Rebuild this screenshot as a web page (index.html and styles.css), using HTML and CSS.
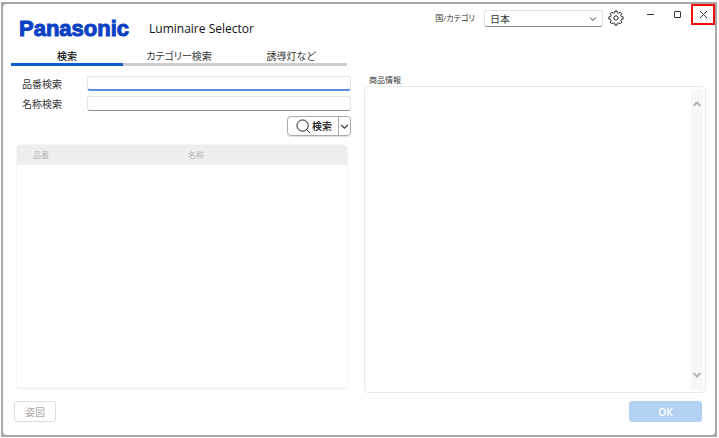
FILE: index.html
```html
<!DOCTYPE html>
<html lang="ja">
<head>
<meta charset="utf-8">
<meta name="viewport" content="width=device-width, initial-scale=1">
<title>Luminaire Selector</title>
<link rel="stylesheet" href="styles.css">
</head>
<body>
<div class="frame">
<div class="window">
  <header class="header">
    <div class="brand">
      <span class="logo">Panasonic</span>
      <h1 class="title">Luminaire Selector</h1>
    </div>
    <div class="toolbar">
      <label class="toolbar-label" for="country">国/カテゴリ</label>
      <div class="select-wrap">
        <select id="country" class="select"><option>日本</option></select>
        <svg class="select-arrow" viewBox="0 0 8 6"><path d="M1 1.500 4 4.500 7 1.500"/></svg>
      </div>
      <button class="icon-button" type="button" aria-label="設定">
        <svg class="gear" viewBox="-8 -8 16 16"><path d="M5.300 1.400 4.800 2.700 5.800 4.200 4.200 5.800 2.700 4.800 1.400 5.300 1.100 7.100H-1.100L-1.400 5.300-2.700 4.800-4.200 5.800-5.800 4.200-4.800 2.700-5.300 1.400-7.100 1.100V-1.100L-5.300-1.400-4.800-2.700-5.800-4.200-4.200-5.800-2.700-4.800-1.400-5.300-1.100-7.100H1.100L1.400-5.300 2.700-4.800 4.200-5.800 5.800-4.200 4.800-2.700 5.300-1.400 7.100-1.100V1.100z"/><circle r="2.200"/></svg>
      </button>
      <div class="window-buttons">
        <button class="window-button" type="button" aria-label="最小化"><svg viewBox="0 0 9 9"><path d="M1 4.500h7"/></svg></button>
        <button class="window-button" type="button" aria-label="最大化"><svg viewBox="0 0 9 9"><rect x="1.500" y="1.500" width="6" height="6" rx="0.500"/></svg></button>
        <button class="window-button window-button-close" type="button" aria-label="閉じる"><svg viewBox="0 0 9 9"><path d="M1 1l7 7M8 1 1 8"/></svg></button>
      </div>
    </div>
  </header>
  <main class="content">
    <section class="search-pane">
      <nav class="tabs">
        <button class="tab tab-active" type="button">検索</button>
        <button class="tab" type="button">カテゴリー検索</button>
        <button class="tab" type="button">誘導灯など</button>
      </nav>
      <form class="search-form">
        <label for="code">品番検索</label>
        <input id="code" class="field field-focused" type="text">
        <label for="name">名称検索</label>
        <input id="name" class="field" type="text">
        <div class="split-button">
          <button class="search-button" type="button">
            <svg class="lens" viewBox="0 0 16 16"><circle cx="7" cy="7" r="6"/><path d="M11.200 11.200l4 4"/></svg>検索
          </button>
          <button class="split-arrow" type="button" aria-label="検索オプション"><svg viewBox="0 0 8 6"><path d="M1 1.500 4 4.500 7 1.500"/></svg></button>
        </div>
      </form>
      <div class="results">
        <table class="results-table">
          <thead><tr><th>品番</th><th>名称</th></tr></thead>
        </table>
      </div>
    </section>
    <section class="info-pane">
      <h2 class="info-title">商品情報</h2>
      <div class="info-box">
        <div class="scrollbar">
          <svg viewBox="0 0 10 8"><path d="M1.500 6 5 2.500 8.500 6"/></svg>
          <svg viewBox="0 0 10 8"><path d="M1.500 2 5 5.500 8.500 2"/></svg>
        </div>
      </div>
    </section>
  </main>
  <footer class="footer">
    <button class="figure-button" type="button" disabled>姿図</button>
    <button class="ok-button" type="button" disabled>OK</button>
  </footer>
</div>
</div>
</body>
</html>
```
FILE: styles.css
```css
* {
  box-sizing: border-box;
}

body {
  margin: 0;
  padding: 2px 2px 1px 1px;
  background: #fff;
  color: #333;
  font: 10px/14px "Open Sans", "Noto Sans CJK JP", sans-serif;
}

button,
input,
select {
  margin: 0;
  padding: 0;
  border: 0;
  background: none;
  color: inherit;
  font: inherit;
}

svg {
  display: block;
  fill: none;
  stroke: currentColor;
}

.frame {
  padding: 2px;
  background: #a8a8a8;
}

.window {
  display: flex;
  flex-direction: column;
  min-height: calc(100vh - 7px);
  border-radius: 4px;
  background: #fff;
}

.header {
  display: flex;
  justify-content: space-between;
  height: 44px;
}

.brand {
  display: flex;
  align-items: center;
  gap: 20px;
  padding: 6px 0 0 16px;
}

.logo {
  color: #0a41c4;
  font: bold 22px/30px "Liberation Sans", sans-serif;
  -webkit-text-stroke: 1px #0a41c4;
}

.title {
  margin: 0;
  font: 500 12px/30px "Open Sans", sans-serif;
  color: #111;
}

.toolbar {
  display: flex;
  align-items: flex-start;
}

.toolbar-label {
  margin: 7px 9px 0 0;
  font-size: 8px;
  font-feature-settings: "palt";
}

.select-wrap {
  position: relative;
  width: 119px;
  margin-top: 6px;
}

.select {
  appearance: none;
  width: 100%;
  height: 17px;
  padding-left: 5px;
  border: 1px solid #e2e2e2;
  border-bottom-color: #8a8a8a;
  border-radius: 3px;
}

.select-arrow {
  position: absolute;
  top: 6px;
  right: 6px;
  width: 8px;
  height: 6px;
  pointer-events: none;
}

.icon-button {
  margin: 6px 0 0 5px;
  color: #222;
}

.gear {
  width: 16px;
  height: 16px;
  stroke-linejoin: round;
}

.window-buttons {
  display: flex;
  margin-left: 13px;
}

.window-button {
  display: grid;
  place-items: center;
  width: 27px;
  height: 21px;
}

.window-button svg {
  width: 9px;
  height: 9px;
}

.window-button-close {
  width: 24px;
  border: 2px solid #f10d0d;
}

.content {
  flex: 1;
  display: grid;
  grid-template-columns: 340fr 342fr;
  gap: 13px;
  padding: 0 9px 0 8px;
}

.search-pane,
.info-pane {
  display: flex;
  flex-direction: column;
}

.tabs {
  display: grid;
  grid-template-columns: repeat(3, 1fr);
  margin-right: 4px;
}

.tab {
  height: 18px;
  border-bottom: 3px solid #cdcdcd;
  font-feature-settings: "palt";
}

.tab-active {
  border-color: #0a5ed0;
  color: #111;
  font-weight: 500;
}

.search-form {
  display: grid;
  grid-template-columns: 65px 1fr;
  row-gap: 5px;
  align-items: center;
  padding: 10px 0 0 11px;
}

.field {
  height: 15px;
  padding: 0 4px;
  border: 1px solid #e4e4e4;
  border-bottom-color: #8f8f8f;
  border-radius: 3px;
}

.field-focused {
  border-bottom: 2px solid #5b8fdc;
}

.split-button {
  grid-column: 2;
  justify-self: end;
  display: flex;
  height: 20px;
  border: 1px solid #aaa;
  border-radius: 4px;
  box-shadow: 0 1px 1px #ddd;
}

.search-button {
  display: flex;
  align-items: center;
  gap: 1px;
  padding: 0 6px 0 8px;
  color: #111;
  font-weight: 500;
}

.lens {
  width: 15px;
  height: 15px;
}

.split-arrow {
  padding: 0 1px;
  border-left: 1px solid #aaa;
}

.split-arrow svg {
  width: 9px;
  height: 7px;
}

.results {
  flex: 1;
  margin: 8px 3px 5px 5px;
  border: 1px solid #f6f6f6;
  border-radius: 4px;
  box-shadow: 0 1px 2px #eee;
  overflow: hidden;
}

.results-table {
  width: 100%;
  border-collapse: collapse;
  background: #eee;
  color: #b5b5b5;
  font-size: 8px;
}

.results-table th {
  width: 47%;
  height: 20px;
  padding: 0 16px;
  font-weight: 400;
  text-align: left;
}

.results-table th + th {
  width: 53%;
}

.info-pane {
  padding-top: 26px;
}

.info-title {
  margin: 0;
  padding-left: 5px;
  font-size: 8px;
  font-weight: 400;
  line-height: 12px;
}

.info-box {
  flex: 1;
  display: flex;
  justify-content: flex-end;
  padding: 2px;
  border: 1px solid #eaeaea;
  border-radius: 4px;
}

.scrollbar {
  display: flex;
  flex-direction: column;
  justify-content: space-between;
  width: 12px;
  padding: 11px 1px;
  background: #f7f7f7;
  color: #b5b5b5;
}

.scrollbar svg {
  width: 10px;
  height: 8px;
  stroke-width: 2;
}

.footer {
  display: flex;
  justify-content: space-between;
  padding: 8px 13px 13px 11px;
}

.figure-button {
  width: 42px;
  height: 21px;
  border: 1px solid #ddd;
  border-radius: 3px;
  color: #aaa;
}

.ok-button {
  width: 73px;
  height: 21px;
  border-radius: 3px;
  background: #b3d2f1;
  color: #fff;
  font-weight: 600;
}
```
